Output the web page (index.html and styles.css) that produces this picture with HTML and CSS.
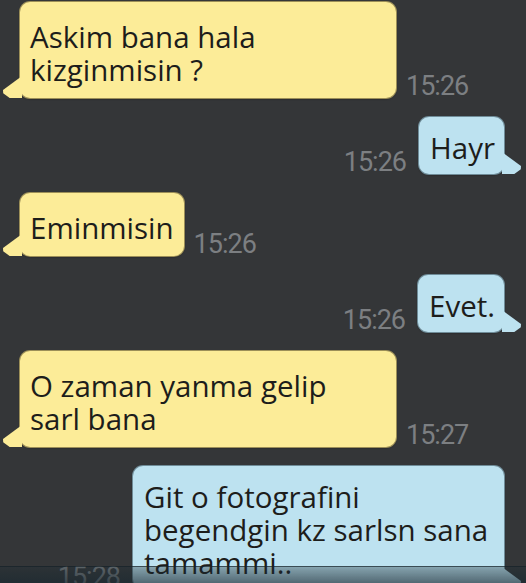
FILE: index.html
```html
<!DOCTYPE html>
<html lang="en">
<head>
    <meta charset="UTF-8">
    <meta name="viewport" content="width=device-width, initial-scale=1.0"/>
    <title>Sohbet</title>
    <link rel="stylesheet" href="styles.css">
</head>
<body>
<div class="chat">
    <div class="row in">
        <div class="bubble wide">Askim bana hala<br>kizginmisin ?</div>
        <span class="time">15:26</span>
    </div>
    <div class="row out">
        <span class="time">15:26</span>
        <div class="bubble">Hayr</div>
    </div>
    <div class="row in">
        <div class="bubble">Eminmisin</div>
        <span class="time">15:26</span>
    </div>
    <div class="row out">
        <span class="time">15:26</span>
        <div class="bubble">Evet.</div>
    </div>
    <div class="row in">
        <div class="bubble wide">O zaman yanma gelip<br>sarl bana</div>
        <span class="time">15:27</span>
    </div>
    <div class="row out">
        <span class="time">15:28</span>
        <div class="bubble wide">Git o fotografini<br>begendgin kz sarlsn sana<br>tamammi..</div>
    </div>
</div>
<div class="bottom-shade"></div>
</body>
</html>
```

FILE: styles.css
```css
html, body {
    overflow: hidden;
}

body {
    margin: 0;
    background: #343638;
    font-family: "Open Sans", "Noto Sans", sans-serif;
    color: #1d1d1b;
}

.chat {
    display: flex;
    flex-direction: column;
    gap: 19px;
    padding: 2px 22px 0 20px;
}

.row {
    display: flex;
    align-items: flex-end;
    gap: 10px;
}

.row.out {
    justify-content: flex-end;
    gap: 13px;
}

.bubble {
    position: relative;
    font-size: 29.5px;
    line-height: 33px;
    padding: 18px 10px 12px;
    border-radius: 10px;
    box-sizing: border-box;
}

.in .bubble {
    background: #fcec98;
    box-shadow: 0 0 0 1px #9c8f58, 0 1px 2px rgba(0, 0, 0, 0.5);
}

.out .bubble {
    background: #bde2f0;
    padding: 14px 9px 10px 11px;
    box-shadow: 0 0 0 1px #6f8c98, 0 1px 2px rgba(0, 0, 0, 0.5);
}

.in .bubble.wide {
    width: 376px;
}

.out .bubble.wide {
    width: 371px;
}

/* tails */
.bubble::after {
    content: "";
    position: absolute;
    bottom: 0;
    width: 19px;
    height: 22px;
}

.in .bubble::after {
    left: -17px;
    background: #fcec98;
    clip-path: polygon(100% 0, 0 64%, 1% 78%, 35% 100%, 100% 100%);
}

.out .bubble::after {
    right: -17px;
    background: #bde2f0;
    clip-path: polygon(0 0, 100% 64%, 99% 78%, 65% 100%, 0 100%);
}

.time {
    font-family: Roboto, "Liberation Sans", sans-serif;
    font-size: 27px;
    line-height: 22px;
    letter-spacing: -1px;
    color: #7c7f82;
    margin-bottom: 1px;
}

.bottom-shade {
    position: fixed;
    left: 0;
    right: 0;
    bottom: 0;
    height: 16px;
    background: linear-gradient(rgba(30, 45, 52, 0.35), rgba(25, 40, 48, 0.65));
    border-top: 1px solid rgba(20, 30, 35, 0.4);
}
```
